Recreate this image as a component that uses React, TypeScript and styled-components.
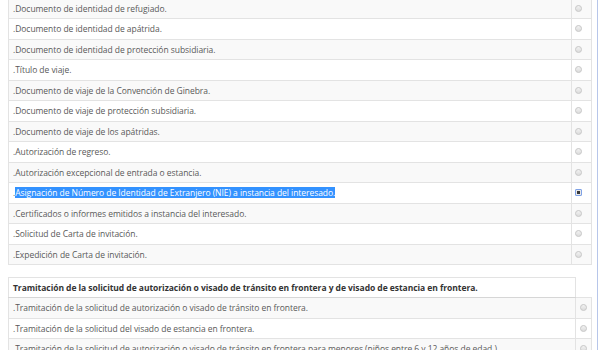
import React from 'react'
import styled, { createGlobalStyle } from 'styled-components';

const GlobalStyle = createGlobalStyle`
  html, body {
    margin: 0;
    padding: 0;
    background: #fff;
    overflow: hidden;
  }
  body {
    font-family: 'Open Sans', 'DejaVu Sans', sans-serif;
  }
`;

const mainItems = [
  '.Documento de identidad de refugiado.',
  '.Documento de identidad de apátrida.',
  '.Documento de identidad de protección subsidiaria.',
  '.Título de viaje.',
  '.Documento de viaje de la Convención de Ginebra.',
  '.Documento de viaje de protección subsidiaria.',
  '.Documento de viaje de los apátridas.',
  '.Autorización de regreso.',
  '.Autorización excepcional de entrada o estancia.',
  '.Asignación de Número de Identidad de Extranjero (NIE) a instancia del interesado.',
  '.Certificados o informes emitidos a instancia del interesado.',
  '.Solicitud de Carta de invitación.',
  '.Expedición de Carta de invitación.',
];

const transitItems = [
  '.Tramitación de la solicitud de autorización o visado de tránsito en frontera.',
  '.Tramitación de la solicitud del visado de estancia en frontera.',
  '.Tramitación de la solicitud de autorización o visado de tránsito en frontera para menores (niños entre 6 y 12 años de edad.)',
];

const SELECTED = 9;

export default function App() {
  return (
    <>
      <GlobalStyle />
      <Page>
        <Content>
          <Table>
            <tbody>
              {mainItems.map((text, i) => (
                <Row key={text} $striped={i % 2 === 0}>
                  <TextCell>
                    {i === SELECTED ? (
                      <>.<Selected>{text.slice(1)}</Selected></>
                    ) : text}
                  </TextCell>
                  <RadioCell $width={20} $pad={3}>
                    <Radio $checked={i === SELECTED} />
                  </RadioCell>
                </Row>
              ))}
            </tbody>
          </Table>

          <Table $second>
            <tbody>
              <Row>
                <HeadCell>
                  Tramitación de la solicitud de autorización o visado de tránsito en frontera y de visado de estancia en frontera.
                </HeadCell>
                <EmptyCell />
              </Row>
              {transitItems.map((text, i) => (
                <Row key={text} $striped={i % 2 === 0}>
                  <TextCell>{text}</TextCell>
                  <RadioCell $width={16} $pad={4}>
                    <Radio />
                  </RadioCell>
                </Row>
              ))}
            </tbody>
          </Table>
        </Content>
      </Page>
    </>
  )
}

const Page = styled.div`
  display: flex;
  width: 600px;
  height: 350px;
  overflow: hidden;
  background: #fff;
`;

const Content = styled.div`
  flex: 1;
  margin-top: -2.5px;
  padding: 0 5px 0 8px;
  border-right: 1px solid #b7c6ea;
  margin-right: 2px;
`;

const Table = styled.table<{ $second?: boolean }>`
  width: 584px;
  border-collapse: collapse;
  font-size: 8.5px;
  letter-spacing: -0.05px;
  color: #595959;
  margin-top: ${p => (p.$second ? '11.5px' : '0')};
`;

const Row = styled.tr<{ $striped?: boolean }>`
  background: ${p => (p.$striped ? '#f9f9f9' : '#fff')};
`;

const TextCell = styled.td`
  height: 19.5px;
  padding: 0 4px;
  line-height: 19.5px;
  border: 1px solid #e3e3e3;
  white-space: nowrap;
  overflow: hidden;
  max-width: 540px;
`;

const HeadCell = styled.th`
  height: 19.5px;
  padding: 0 4px;
  line-height: 19.5px;
  text-align: left;
  font-weight: 700;
  color: #333;
  background: #fff;
  border: 1px solid #e3e3e3;
  border-bottom: 1px solid #d6d6d6;
`;

const EmptyCell = styled.td`
  background: #fff;
  border: none;
`;

const RadioCell = styled.td<{ $width: number; $pad: number }>`
  width: ${p => p.$width}px;
  padding: 0 0 0 ${p => p.$pad}px;
  box-sizing: border-box;
  text-align: left;
  border: 1px solid #e3e3e3;
`;

const Radio = styled.span<{ $checked?: boolean }>`
  display: block;
  box-sizing: border-box;
  width: 7px;
  height: 7px;
  border-radius: ${p => (p.$checked ? '1px' : '50%')};
  border: 1px solid ${p => (p.$checked ? '#7fa2e6' : '#c8c8c8')};
  background: ${p => (p.$checked
    ? 'radial-gradient(circle, #3a3a3a 0 1.6px, #e8e8e8 2px)'
    : 'linear-gradient(#f2f2f2, #dcdcdc)')};
`;

const Selected = styled.span`
  background: #3392ff;
  color: #fff;
`;
